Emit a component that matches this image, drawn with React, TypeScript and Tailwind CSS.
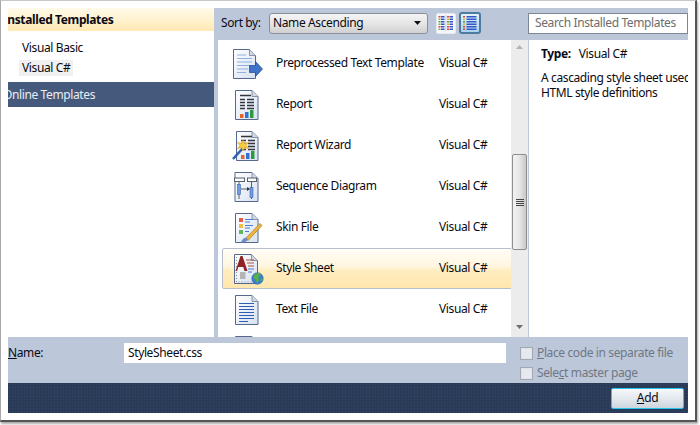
import type { ReactNode } from "react";

const FONT = "font-['Noto_Sans',sans-serif]";

function DocShell({ x = 5.5, w = 22.5, children }: { x?: number; w?: number; children?: ReactNode }) {
  const r = x + w;
  return (
    <>
      <defs>
        <linearGradient id="docFill" x1="0" y1="0" x2="1" y2="1">
          <stop offset="0" stopColor="#ffffff" />
          <stop offset="1" stopColor="#d6e1f2" />
        </linearGradient>
      </defs>
      <path d={`M${x} 2.5H${r - 6}L${r} 8.5V31.5H${x}Z`} fill="url(#docFill)" stroke="#56698c" />
      <path d={`M${r - 6} 2.5V8.5H${r}`} fill="#d3d9e2" stroke="#8794aa" />
      {children}
    </>
  );
}

function Bars({ left = 10 }: { left?: number }) {
  return (
    <>
      <path d={`M${left} 7.5h11M${left} 11.5h5M${left + 7} 11.5h7M${left} 14.5h5M${left + 7} 14.5h7M${left} 17.5h5M${left + 7} 17.5h7M${left} 20.5h5M${left + 7} 20.5h7`} stroke="#33373d" strokeWidth="1.4" />
      <rect x={left} y="26" width="3.5" height="4" fill="#e2662a" />
      <rect x={left + 5} y="24" width="3.5" height="6" fill="#2f74d0" />
      <rect x={left + 10} y="22" width="3.5" height="8" fill="#2c9a3c" />
    </>
  );
}

const icons: Record<string, ReactNode> = {
  pre: (
    <>
      <DocShell x={3.5} w={22}>
        <path d="M7 8h9M7 11.5h15M7 15h15M7 18.5h15M7 22h11M7 25.5h9" stroke="#8fb0e0" strokeWidth="1" />
      </DocShell>
      <path d="M19.5 18.5h6v-4l7 7.5-7 7.5v-4h-6Z" fill="#3f72c9" stroke="#2c5296" strokeWidth="0.8" />
    </>
  ),
  report: (
    <DocShell>
      <Bars />
    </DocShell>
  ),
  wizard: (
    <>
      <DocShell x={6.5} w={21.5}>
        <Bars left={11} />
      </DocShell>
      <path d="M3 30 13 19" stroke="#2f5fb0" strokeWidth="2.6" />
      <path d="M13 11l1.500 3.500 4-1-2.500 3 2.500 3-4-1-1.500 3.500-1.500-3.500-4 1 2.500-3-2.500-3 4 1Z" fill="#f6cf3e" stroke="#e8961e" strokeWidth="0.6" />
    </>
  ),
  seq: (
    <DocShell x={5} w={23}>
      <rect x="4.500" y="8" width="10" height="3.500" fill="#fff" stroke="#596069" />
      <rect x="17.500" y="8" width="9" height="3.500" fill="#fff" stroke="#596069" />
      <path d="M9 12v17M21.500 12v17M11 19h8" stroke="#596069" />
      <rect x="7.500" y="14.500" width="3" height="10" fill="#6f9de0" stroke="#3f67a8" strokeWidth="0.6" />
      <rect x="20" y="17.500" width="3" height="10" fill="#6f9de0" stroke="#3f67a8" strokeWidth="0.6" />
      <path d="M20 19l-3-2v4Z" fill="#333" />
    </DocShell>
  ),
  skin: (
    <>
      <DocShell>
        <rect x="9" y="7" width="4" height="4" fill="#e65c4a" />
        <rect x="9" y="13" width="4" height="4" fill="#f0c040" />
        <rect x="9" y="19" width="4" height="4" fill="#5cb85c" />
        <path d="M15 8.500h8M15 11h5M15 14.500h8M15 17h5M15 20.500h4" stroke="#4a7fd0" />
      </DocShell>
      <path d="M16 27 30 12.500l2 2-14 15Z" fill="#eeb63c" stroke="#a87820" strokeWidth="0.7" />
      <path d="M11 31.500c1-3 3-5.500 5.500-4.500l1.500 1.500c-1 2-4.500 3.500-7 3Z" fill="#6b8ccc" />
    </>
  ),
  css: (
    <>
      <DocShell x={4.500} w={23}>
        <path d="M6.500 5v25H24" stroke="#888" strokeDasharray="1 2" fill="none" />
        <path d="M5.500 19 10.500 4h2l5 15h-3l-1.200-4h-5l-1.200 4Z" fill="#8f2323" />
        <path d="M16 8h8M17 11h7M18 14h6" stroke="#b0543a" />
        <path d="M18 17h6M18 20h4" stroke="#4a7fd0" />
        <rect x="10" y="20" width="5.500" height="7" fill="#b4b4b4" />
      </DocShell>
      <circle cx="27.500" cy="26.500" r="5.700" fill="#3a7fd0" stroke="#2b5f95" strokeWidth="0.6" />
      <path d="M23.500 24c1.500-2.500 3.500-3.500 5.500-3l1.500 2-2 2 .5 3.500-2 2.500-1.500-3.500-2-1Z" fill="#55b04a" />
      <path d="M30.500 27l2-.8.3 1.800-1.800 1.800Z" fill="#55b04a" />
    </>
  ),
  text: (
    <DocShell>
      <path d="M9 10.500h15M9 13.500h15M9 16.500h15M9 19.500h15M9 22.500h15M9 25.500h15M9 28.500h9" stroke="#2f5fb5" strokeWidth="1.200" />
    </DocShell>
  ),
  blank: <DocShell />,
};

const rows = [
  ["pre", "Preprocessed Text Template"],
  ["report", "Report"],
  ["wizard", "Report Wizard"],
  ["seq", "Sequence Diagram"],
  ["skin", "Skin File"],
  ["css", "Style Sheet"],
  ["text", "Text File"],
  ["blank", ""],
];

function Row({ icon, name }: { icon: string; name: string }) {
  const selected = name === "Style Sheet";
  return (
    <div className={`-mr-[2px] flex h-[41px] shrink-0 items-center rounded-[2px] ${selected ? "border border-[#b5bfcc] bg-[linear-gradient(#fffdf5,#fff6e0_45%,#ffedc0_55%,#ffe7ae)] pl-[7px]" : "pl-2"}`}>
      <svg width="34" height="34" viewBox="0 0 34 34" className="shrink-0">
        {icons[icon]}
      </svg>
      <span className="ml-[12px] w-[163px] whitespace-nowrap pb-[2px]">{name}</span>
      {name && <span className="pb-[2px]">Visual C#</span>}
    </div>
  );
}

const dots = ["#d84a3a", "#e0b030", "#4aa04a", "#e0b030", "#d84a3a", "#d84a3a"];

function ViewIcon({ wide }: { wide?: boolean }) {
  return (
    <svg width="16" height="16" viewBox="0 0 16 16">
      {dots.map((c, i) => {
        const y = 1 + i * 2.5;
        return wide ? (
          <g key={i}>
            <rect x="1" y={y} width="2" height="1.500" fill={c} />
            <rect x="4.500" y={y} width="10" height="1.500" fill="#3558c8" />
          </g>
        ) : (
          <g key={i}>
            <rect x="0.500" y={y} width="2" height="1.500" fill={i % 2 ? "#7fb04a" : c} />
            <rect x="3" y={y} width="3.500" height="1.500" fill="#3558c8" />
            <rect x="9" y={y} width="2" height="1.500" fill={c} />
            <rect x="11.500" y={y} width="3.500" height="1.500" fill="#3558c8" />
          </g>
        );
      })}
      {!wide && <rect x="7.500" y="0" width="0.800" height="16" fill="#c4cad4" />}
    </svg>
  );
}

function Check({ label }: { label: ReactNode }) {
  return (
    <div className="flex h-[20px] items-center text-[#6f7785]">
      <div className="flex size-[13px] items-center justify-center border border-[#a3a9b2] bg-[#dfe3e9]">
        <div className="size-[9px] bg-[#e6e9ee]" />
      </div>
      <span className="ml-[4px] whitespace-nowrap">{label}</span>
    </div>
  );
}

export default function App() {
  return (
    <div className={`h-[425px] w-[700px] overflow-hidden bg-white text-[12px] tracking-[-0.38px] text-[#0a0a14] ${FONT}`}>
      {/* screenshot frame */}
      <div className="h-[422px] w-[697px] border-t border-r-2 border-b-2 border-l border-t-[#c8c8c8] border-r-[#555555] border-b-[#555555] border-l-[#a8a8a8] pt-[7px] pl-[7px] shadow-[1px_2px_2px_#aaaaaa]">
        <div className="flex h-[405px] w-[680px] flex-col overflow-hidden">
          <div className="flex h-[329px] bg-[#bcc8d9]">
            {/* templates tree */}
            <div className="h-full w-[206px] shrink-0 overflow-hidden bg-white">
              <div className="flex h-[23px] items-center whitespace-nowrap bg-[linear-gradient(#fffbea,#ffe9b4)] font-bold">
                <span className="-ml-[5px]">Installed Templates</span>
              </div>
              <div className="pt-[9px] pl-[11px]">
                <div className="flex h-[16px] items-center whitespace-nowrap pl-[3px]">Visual Basic</div>
                <div className="mt-[4px] flex h-[16px] w-[54px] items-center whitespace-nowrap bg-[#f0f0f0] pl-[3px]">Visual C#</div>
              </div>
              <div className="mt-[6px] flex h-[25px] items-center whitespace-nowrap bg-[#44597c] text-[#e8edf4]">
                <span className="-ml-[5px]">Online Templates</span>
              </div>
            </div>

            <div className="flex min-w-0 flex-1 flex-col pl-[4px]">
              {/* sort toolbar */}
              <div className="flex h-[32px] shrink-0 items-center pb-[2px]">
                <span className="ml-[3px] w-[48px]">Sort by:</span>
                <div className="flex h-[21px] w-[159px] items-center justify-between rounded-[3px] border border-[#8a8f98] bg-[linear-gradient(#f4f4f4,#e6e6e6_50%,#d0d0d0)] pr-[6px] pl-[3px]">
                  <span>Name Ascending</span>
                  <svg width="7" height="4" viewBox="0 0 7 4"><path d="M0 0h7L3.500 4Z" fill="#111" /></svg>
                </div>
                <div className="ml-[8px] flex h-[21px] w-[20px] items-center justify-center rounded-[2px] border border-[#e6eaf0] bg-[#f4f6f9]">
                  <ViewIcon />
                </div>
                <div className="ml-[3px] flex h-[22px] w-[22px] items-center justify-center rounded-[3px] border-2 border-[#4d7ba0] bg-[linear-gradient(#e5f3fb,#a9d4ee)]">
                  <ViewIcon wide />
                </div>
                <div className="ml-[47px] flex h-[21px] flex-1 items-center border border-[#7e8794] bg-white pl-[6px] text-[#6d6d6d]">
                  <span className="whitespace-nowrap">Search Installed Templates</span>
                </div>
              </div>

              <div className="flex min-h-0 flex-1">
                {/* template list */}
                <div className="flex w-[293px] shrink-0 flex-col overflow-hidden bg-white pt-[3px] pl-[4px]">
                  {rows.map(([icon, name]) => (
                    <Row key={icon} icon={icon} name={name} />
                  ))}
                </div>
                {/* scrollbar */}
                <div className="flex w-[17px] shrink-0 flex-col items-center bg-[#ececec] pt-[5px] pb-[8px]">
                  <svg width="7" height="4" viewBox="0 0 7 4"><path d="M0 4h7L3.500 0Z" fill="#b4b4b4" /></svg>
                  <div className="mt-[105px] flex h-[96px] w-[15px] flex-col items-center justify-center gap-[1px] rounded-[2px] border border-[#8e8e8e] bg-[linear-gradient(90deg,#f2f2f2,#e6e6e6_50%,#c8c8c8)]">
                    <div className="h-px w-[8px] bg-[#444]" />
                    <div className="h-px w-[8px] bg-[#444]" />
                    <div className="h-px w-[8px] bg-[#444]" />
                    <div className="h-px w-[8px] bg-[#444]" />
                  </div>
                  <svg width="7" height="4" viewBox="0 0 7 4" className="mt-auto"><path d="M0 0h7L3.500 4Z" fill="#6f6f6f" /></svg>
                </div>
                {/* details */}
                <div className="w-[160px] shrink-0 overflow-hidden border-l border-[#bcc8d9] bg-white pt-[5px] pl-[12px] whitespace-nowrap">
                  <div><span className="font-bold">Type:</span><span className="ml-[8px]">Visual C#</span></div>
                  <div className="mt-[7px] leading-[15px]">
                    A cascading style sheet used to<br />HTML style definitions
                  </div>
                </div>
              </div>
            </div>
          </div>

          {/* name row */}
          <div className="flex h-[46px] shrink-0 bg-[#bcc8d9]">
            <div className="mt-[6px] flex h-[19px] items-center">
              <span className="w-[116px] whitespace-nowrap"><u>N</u>ame:</span>
              <div className="flex h-[20px] w-[382px] items-center bg-white pl-[4px]">StyleSheet.css</div>
            </div>
            <div className="ml-[14px] flex flex-col pt-[6px]">
              <Check label={<><u>P</u>lace code in separate file</>} />
              <Check label={<>Sele<u>c</u>t master page</>} />
            </div>
          </div>

          {/* footer */}
          <div className="flex h-[30px] shrink-0 items-center justify-end bg-[#2a3b58] bg-[radial-gradient(#34466a_1px,transparent_1px)] bg-[length:3px_3px] pr-[4px]">
            <div className="flex h-[21px] w-[73px] items-center justify-center rounded-[2px] border border-[#27c4ec] bg-[linear-gradient(#f6f8fa,#e4e9ee_50%,#cdd6dd)]">
              <span><u>A</u>dd</span>
            </div>
          </div>
        </div>
      </div>
    </div>
  );
}
